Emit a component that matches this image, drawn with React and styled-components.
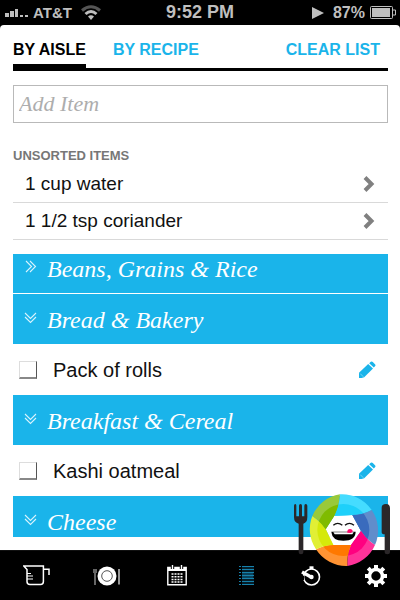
import React, { useState } from 'react';
import styled, { createGlobalStyle } from 'styled-components';

const GlobalStyle = createGlobalStyle`
  * {
    box-sizing: border-box;
  }

  body {
    margin: 0;
    background: #000;
    font-family: 'Liberation Sans', Arial, sans-serif;
  }

  button {
    padding: 0;
    border: 0;
    background: none;
    font: inherit;
    cursor: pointer;
  }
`;

const Phone = styled.div`
  position: relative;
  display: flex;
  flex-direction: column;
  height: 100vh;
  overflow: hidden;
  background: #000;
`;

const StatusBar = styled.header`
  display: grid;
  grid-template-columns: 1fr auto 1fr;
  align-items: center;
  height: 25px;
  flex-shrink: 0;
  padding: 0 4px;
  color: #bfbfbf;
  font-size: 16px;
  font-weight: 700;
`;

const StatusGroup = styled.div`
  display: flex;
  align-items: center;
  justify-content: ${(props) => (props.$end ? 'flex-end' : 'flex-start')};
  gap: ${(props) => (props.$end ? '5px' : '4px')};
`;

const Carrier = styled.span`
  margin-right: 5px;
  font-size: 15px;
`;

const PlayIcon = styled.svg`
  margin-right: 4px;
`;

const Clock = styled.span`
  font-size: 18px;
`;

const Card = styled.main`
  display: flex;
  flex-direction: column;
  flex: 1;
  min-height: 0;
  padding: 0 12px 13px 13px;
  background: #fff;
  border-radius: 4px 4px 0 0;
`;

const Nav = styled.nav`
  display: flex;
  height: 46px;
  flex-shrink: 0;
  gap: 27px;
  border-bottom: 3px solid #000;
`;

const NavButton = styled.button`
  && {
    padding-top: 10px;
    border-bottom: 4px solid ${(props) => (props.$active ? '#000' : 'transparent')};
    color: ${(props) => (props.$active ? '#000' : '#1ab4ea')};
    font-size: 16px;
    line-height: 24px;
    font-weight: 700;
  }
`;

const ClearButton = styled(NavButton)`
  margin-left: auto;
  margin-right: 8px;
`;

const AddInput = styled.input`
  flex-shrink: 0;
  width: 100%;
  height: 38px;
  margin: 14px 0 25px;
  padding: 0 5px;
  border: 1px solid #b9b9b9;
  border-radius: 0;
  outline: none;
  color: #000;
  font-family: 'Liberation Serif', Georgia, serif;
  font-style: italic;
  font-size: 22px;

  &::placeholder {
    color: #adadad;
  }
`;

const GroupTitle = styled.h2`
  margin: 0;
  color: #777;
  font-size: 13px;
  line-height: 16px;
  font-weight: 700;
`;

const UnsortedList = styled.ul`
  margin: 2px 0 14px;
  padding: 0;
  list-style: none;
`;

const UnsortedItem = styled.li`
  border-bottom: 1px solid #d9d9d9;
`;

const UnsortedButton = styled.button`
  && {
    display: flex;
    align-items: center;
    justify-content: space-between;
    width: 100%;
    height: 36px;
    padding: 0 13px 0 12px;
    color: #111;
    font-size: 19px;
  }
`;

const AisleScroll = styled.div`
  flex: 1;
  min-height: 0;
  overflow: hidden;
`;

// the list is scrolled a little past its first heading
const AisleList = styled.div`
  margin-top: -11px;
`;

const AisleHeader = styled.button`
  && {
    display: flex;
    align-items: center;
    gap: 10px;
    width: 100%;
    height: 51px;
    padding: 2px 11px 0;
    border-bottom: 1px solid #fff;
    background: #1ab4ea;
    color: #fff;
    font-family: 'Liberation Serif', Georgia, serif;
    font-style: italic;
    font-size: 24px;
  }
`;

const ItemRow = styled.div`
  display: flex;
  align-items: center;
  height: 50px;
  padding: 0 12px 0 6px;
`;

const CheckLabel = styled.label`
  display: flex;
  align-items: center;
  flex: 1;
  gap: 16px;
  color: #111;
  font-size: 20px;
`;

const Check = styled.input`
  appearance: none;
  width: 18px;
  height: 18px;
  margin: 0;
  border: 1px solid #ddd;
  border-right-color: #555;
  border-bottom: 2px solid #888;
  background: ${(props) => (props.checked ? '#1ab4ea' : '#fff')};
`;

const IconButton = styled.button`
  && {
    display: flex;
  }
`;

const TabBar = styled.nav`
  display: grid;
  grid-template-columns: 73fr 67fr 74fr 64fr 66fr 43fr;
  height: 50px;
  flex-shrink: 0;
  padding-right: 13px;
  border-top: 1px solid #111;
  background: #000;
`;

const Tab = styled.button`
  && {
    display: flex;
    align-items: center;
    justify-content: center;
    color: #fff;
  }

  &&:last-child {
    justify-content: flex-end;
  }
`;

const PlateBadge = styled.svg`
  position: absolute;
  right: 0;
  bottom: 25px;
  pointer-events: none;
`;

const aisles = [
  { name: 'Beans, Grains & Rice', open: false, items: [] },
  { name: 'Bread & Bakery', open: true, items: ['Pack of rolls'] },
  { name: 'Breakfast & Cereal', open: true, items: ['Kashi oatmeal'] },
  { name: 'Cheese', open: true, items: [] },
];

const unsorted = ['1 cup water', '1 1/2 tsp coriander'];

const petals = [
  {
    light: '#45dcff',
    dark: '#1dd0fa',
    d: 'M180 28A107 107 0 0 1 275 75Q246 90 217 90L163 92Q178 62 180 28Z',
  },
  {
    light: '#618dcb',
    dark: '#3a6bbd',
    d: 'M275 75A107 107 0 0 1 285 180Q260 164 243 138L217 90Q248 90 275 75Z',
  },
  {
    light: '#ff3399',
    dark: '#ff0080',
    d: 'M285 180A107 107 0 0 1 202 243Q200 212 213 180L243 138Q260 164 285 180Z',
  },
  {
    light: '#ff9333',
    dark: '#ff7800',
    d: 'M202 243A107 107 0 0 1 108 193Q134 180 160 180L213 180Q200 212 202 243Z',
  },
  {
    light: '#e1ef35',
    dark: '#d5e90a',
    d: 'M108 193A107 107 0 0 1 97 93Q120 108 137 133L160 180Q134 180 108 193Z',
  },
  {
    light: '#99c93a',
    dark: '#7fbb00',
    d: 'M97 93A107 107 0 0 1 180 28Q178 62 163 92L137 133Q120 108 97 93Z',
  },
];

function SignalIcon() {
  return (
    <svg width="25" height="9" viewBox="0 0 25 9" fill="#bfbfbf" aria-hidden="true">
      <path d="M1 5h4v4H1zM6 3h4v6H6zM11 1h3v8h-3zM16 7h3v2h-3zM21 7h3v2h-3z" />
    </svg>
  );
}

function WifiIcon() {
  return (
    <svg width="20" height="15" viewBox="0 0 20 15" fill="none" strokeWidth="3" aria-hidden="true">
      <path d="M1 5.5Q10-2 19 5.5" stroke="#555" />
      <path d="M4.5 9Q10 4 15.5 9" stroke="#bfbfbf" />
      <path d="M7 11.5Q10 9 13 11.5L10 15Z" fill="#bfbfbf" />
    </svg>
  );
}

function BatteryIcon() {
  return (
    <svg width="26" height="13" viewBox="0 0 26 13" aria-hidden="true">
      <rect x="0.5" y="0.5" width="22" height="12" rx="1" fill="none" stroke="#bfbfbf" />
      <path d="M2 2h18v9H2z" fill="#bfbfbf" />
      <path d="M23 4h2.5v5H23" fill="none" stroke="#bfbfbf" />
    </svg>
  );
}

function ChevronIcon() {
  return (
    <svg width="12" height="18" viewBox="0 0 12 18" fill="none" aria-hidden="true">
      <path d="M2 2.5L8.5 9L2 15.5" stroke="#808080" strokeWidth="4" />
    </svg>
  );
}

function DoubleChevron({ open }) {
  return (
    <svg
      width="13"
      height="18"
      viewBox="0 0 13 18"
      fill="none"
      stroke="#d9f3fd"
      strokeWidth="1.1"
      aria-hidden="true"
    >
      {open ? (
        <path d="M1 2L6.5 7.5L12 2M1 6L6.5 11.5L12 6" />
      ) : (
        <path d="M2 1L7.5 6.5L2 12M6 1L11.5 6.5L6 12" />
      )}
    </svg>
  );
}

function PencilIcon() {
  return (
    <svg width="18" height="18" viewBox="0 0 18 18" fill="#1ab4ea" aria-hidden="true">
      <path d="M1 11.8L10.2 3L15 7.6L6.2 16.2L3.6 17H1Z" />
      <path d="M11.2 2.2L12.8 0.8Q13.8 0.1 14.8 0.9L17.2 3.4Q17.9 4.2 17.2 5L15.8 6.6Z" />
      <path d="M2.2 12.6L5.4 15.8" stroke="#8fdcf6" strokeWidth="0.8" />
    </svg>
  );
}

function CupIcon() {
  return (
    <svg width="27" height="21" viewBox="0 0 27 21" fill="none" stroke="#fff" aria-hidden="true">
      <path d="M0.8 1H20.4V16.5Q20.4 19.5 17.5 19.5H7Q4 19.5 4 16.5V4.5Z" strokeWidth="1.5" />
      <path d="M20.4 4.2H26V10" strokeWidth="1.5" />
      <path d="M4 8.5h4M4 11h6M4 14h6" strokeWidth="1" />
    </svg>
  );
}

function DishIcon() {
  return (
    <svg width="27" height="20" viewBox="0 0 27 20" fill="none" aria-hidden="true">
      <circle cx="14" cy="10" r="9.5" fill="#fff" />
      <circle cx="14" cy="10" r="5.3" stroke="#555" />
      <path d="M1 3v4M3 3v4M2 7v12" stroke="#aaa" strokeWidth="1.2" />
      <path d="M26 3v15.5" stroke="#bbb" strokeWidth="1.6" />
    </svg>
  );
}

function CalendarIcon() {
  return (
    <svg width="20" height="21" viewBox="0 0 20 21" fill="none" stroke="#fff" aria-hidden="true">
      <path d="M0.8 2.5H19.2V19.7H0.8Z" strokeWidth="1.4" />
      <path d="M1 4.5H19" strokeWidth="3" />
      <path d="M5.5 0V4M14.5 0V4" stroke="#000" strokeWidth="3.4" />
      <path d="M5.5 0V4M14.5 0V4" strokeWidth="1.4" />
      <path d="M4.5 9h12M4.5 11.7h12M4.5 14.4h12M4.5 17h12" strokeWidth="1.5" strokeDasharray="2 1" />
    </svg>
  );
}

function ListIcon() {
  return (
    <svg width="15" height="19" viewBox="0 0 15 19" aria-hidden="true">
      <path d="M3 6H14V13H3Z" fill="#0c4a66" />
      <path
        d="M0 0.5h2M3 0.5h12M0 3.5h2M3 3.5h12M0 6.5h2M3 6.5h12M0 9.5h2M3 9.5h12M0 12.5h2M3 12.5h12M0 15.5h2M3 15.5h12M0 18.5h2M3 18.5h12"
        stroke="#1681ac"
      />
      <path d="M3 2h12M3 5h12M3 8h12M3 11h12M3 14h12M3 17h12" stroke="#0b3c52" />
    </svg>
  );
}

function TimerIcon() {
  return (
    <svg width="20" height="20" viewBox="0 0 20 20" fill="none" stroke="#fff" aria-hidden="true">
      <circle cx="10.5" cy="11" r="8" strokeWidth="1.6" />
      <path d="M0 8V14H3V10Z" fill="#000" stroke="none" />
      <path d="M8.5 1.8h4" strokeWidth="3" />
      <path d="M1 6L10 11" strokeWidth="3.4" />
      <circle cx="10.5" cy="11" r="2.2" fill="#fff" stroke="none" />
    </svg>
  );
}

function GearIcon() {
  return (
    <svg width="22" height="22" viewBox="0 0 22 22" fill="none" stroke="#fff" aria-hidden="true">
      <circle cx="11" cy="11" r="6.5" strokeWidth="3.6" />
      <path
        d="M11 0v4M11 18v4M0 11h4M18 11h4M3.2 3.2l2.9 2.9M15.9 15.9l2.9 2.9M18.8 3.2l-2.9 2.9M6.1 15.9l-2.9 2.9"
        strokeWidth="4"
      />
    </svg>
  );
}

function Badge() {
  return (
    <PlateBadge width="120" height="90" viewBox="0 0 360 270" role="img" aria-label="Plate">
      <defs>
        <clipPath id="inner">
          <circle cx="190" cy="135" r="78" />
        </clipPath>
      </defs>
      <path
        d="M42 62Q42 57 46 57Q49 57 49 62V94H57V62Q57 57 61.500 57Q66 57 66 62V94H73V62Q73 57 77 57Q82 57 82 62V96Q82 113 70 116V202Q70 208 63 208Q56 208 56 202V116Q42 113 42 96Z"
        fill="#2b2729"
      />
      <path
        d="M305 68Q305 57 318 57Q330 57 330 70V202Q330 208 322 208Q314 208 314 202V148Q305 148 305 142Z"
        fill="#2b2729"
      />
      <path d="M163 92L217 90L243 138L213 180H160L137 133Z" fill="#fff" />
      {petals.map((petal) => (
        <path key={petal.light} d={petal.d} fill={petal.light} />
      ))}
      <g clipPath="url(#inner)">
        {petals.map((petal) => (
          <path key={petal.dark} d={petal.d} fill={petal.dark} />
        ))}
      </g>
      <path d="M160 121Q173 109 187 121M195 121Q208 109 222 121" fill="none" stroke="#111" strokeWidth="4" />
      <path d="M154 140H227Q226 167 190 167Q156 167 154 140Z" fill="#000" />
      <path d="M160 142H221L217 148H164Z" fill="#fff" />
      <path d="M202 143V138Q203 132 210 132Q218 132 218 140L212 144Z" fill="#ff0a6c" />
    </PlateBadge>
  );
}

const tabs = [
  { label: 'Recipes', Icon: CupIcon },
  { label: 'Menus', Icon: DishIcon },
  { label: 'Calendar', Icon: CalendarIcon },
  { label: 'Shopping list', Icon: ListIcon },
  { label: 'Timer', Icon: TimerIcon },
  { label: 'Settings', Icon: GearIcon },
];

function App() {
  const [view, setView] = useState('aisle');
  const [checked, setChecked] = useState({});

  const toggle = (item) => {
    setChecked({ ...checked, [item]: !checked[item] });
  };

  return (
    <>
      <GlobalStyle />
      <Phone>
        <StatusBar>
          <StatusGroup>
            <SignalIcon />
            <Carrier>AT&amp;T</Carrier>
            <WifiIcon />
          </StatusGroup>
          <Clock>9:52 PM</Clock>
          <StatusGroup $end>
            <PlayIcon width="12" height="12" viewBox="0 0 12 12" aria-hidden="true">
              <path d="M0 0L12 6L0 12Z" fill="#bfbfbf" />
            </PlayIcon>
            <span>87%</span>
            <BatteryIcon />
          </StatusGroup>
        </StatusBar>
        <Card>
          <Nav>
            <NavButton $active={view === 'aisle'} onClick={() => setView('aisle')}>
              BY AISLE
            </NavButton>
            <NavButton $active={view === 'recipe'} onClick={() => setView('recipe')}>
              BY RECIPE
            </NavButton>
            <ClearButton onClick={() => setChecked({})}>CLEAR LIST</ClearButton>
          </Nav>
          <AddInput type="text" placeholder="Add Item" aria-label="Add Item" />
          <GroupTitle>UNSORTED ITEMS</GroupTitle>
          <UnsortedList>
            {unsorted.map((item) => (
              <UnsortedItem key={item}>
                <UnsortedButton>
                  {item}
                  <ChevronIcon />
                </UnsortedButton>
              </UnsortedItem>
            ))}
          </UnsortedList>
          <AisleScroll>
            <AisleList>
              {aisles.map((aisle) => (
                <section key={aisle.name}>
                  <AisleHeader aria-expanded={aisle.open}>
                    <DoubleChevron open={aisle.open} />
                    {aisle.name}
                  </AisleHeader>
                  {aisle.items.map((item) => (
                    <ItemRow key={item}>
                      <CheckLabel>
                        <Check
                          type="checkbox"
                          checked={!!checked[item]}
                          onChange={() => toggle(item)}
                        />
                        {item}
                      </CheckLabel>
                      <IconButton aria-label={`Edit ${item}`}>
                        <PencilIcon />
                      </IconButton>
                    </ItemRow>
                  ))}
                </section>
              ))}
            </AisleList>
          </AisleScroll>
        </Card>
        <TabBar>
          {tabs.map(({ label, Icon }) => (
            <Tab key={label} aria-label={label}>
              <Icon />
            </Tab>
          ))}
        </TabBar>
        <Badge />
      </Phone>
    </>
  );
}

export default App;
